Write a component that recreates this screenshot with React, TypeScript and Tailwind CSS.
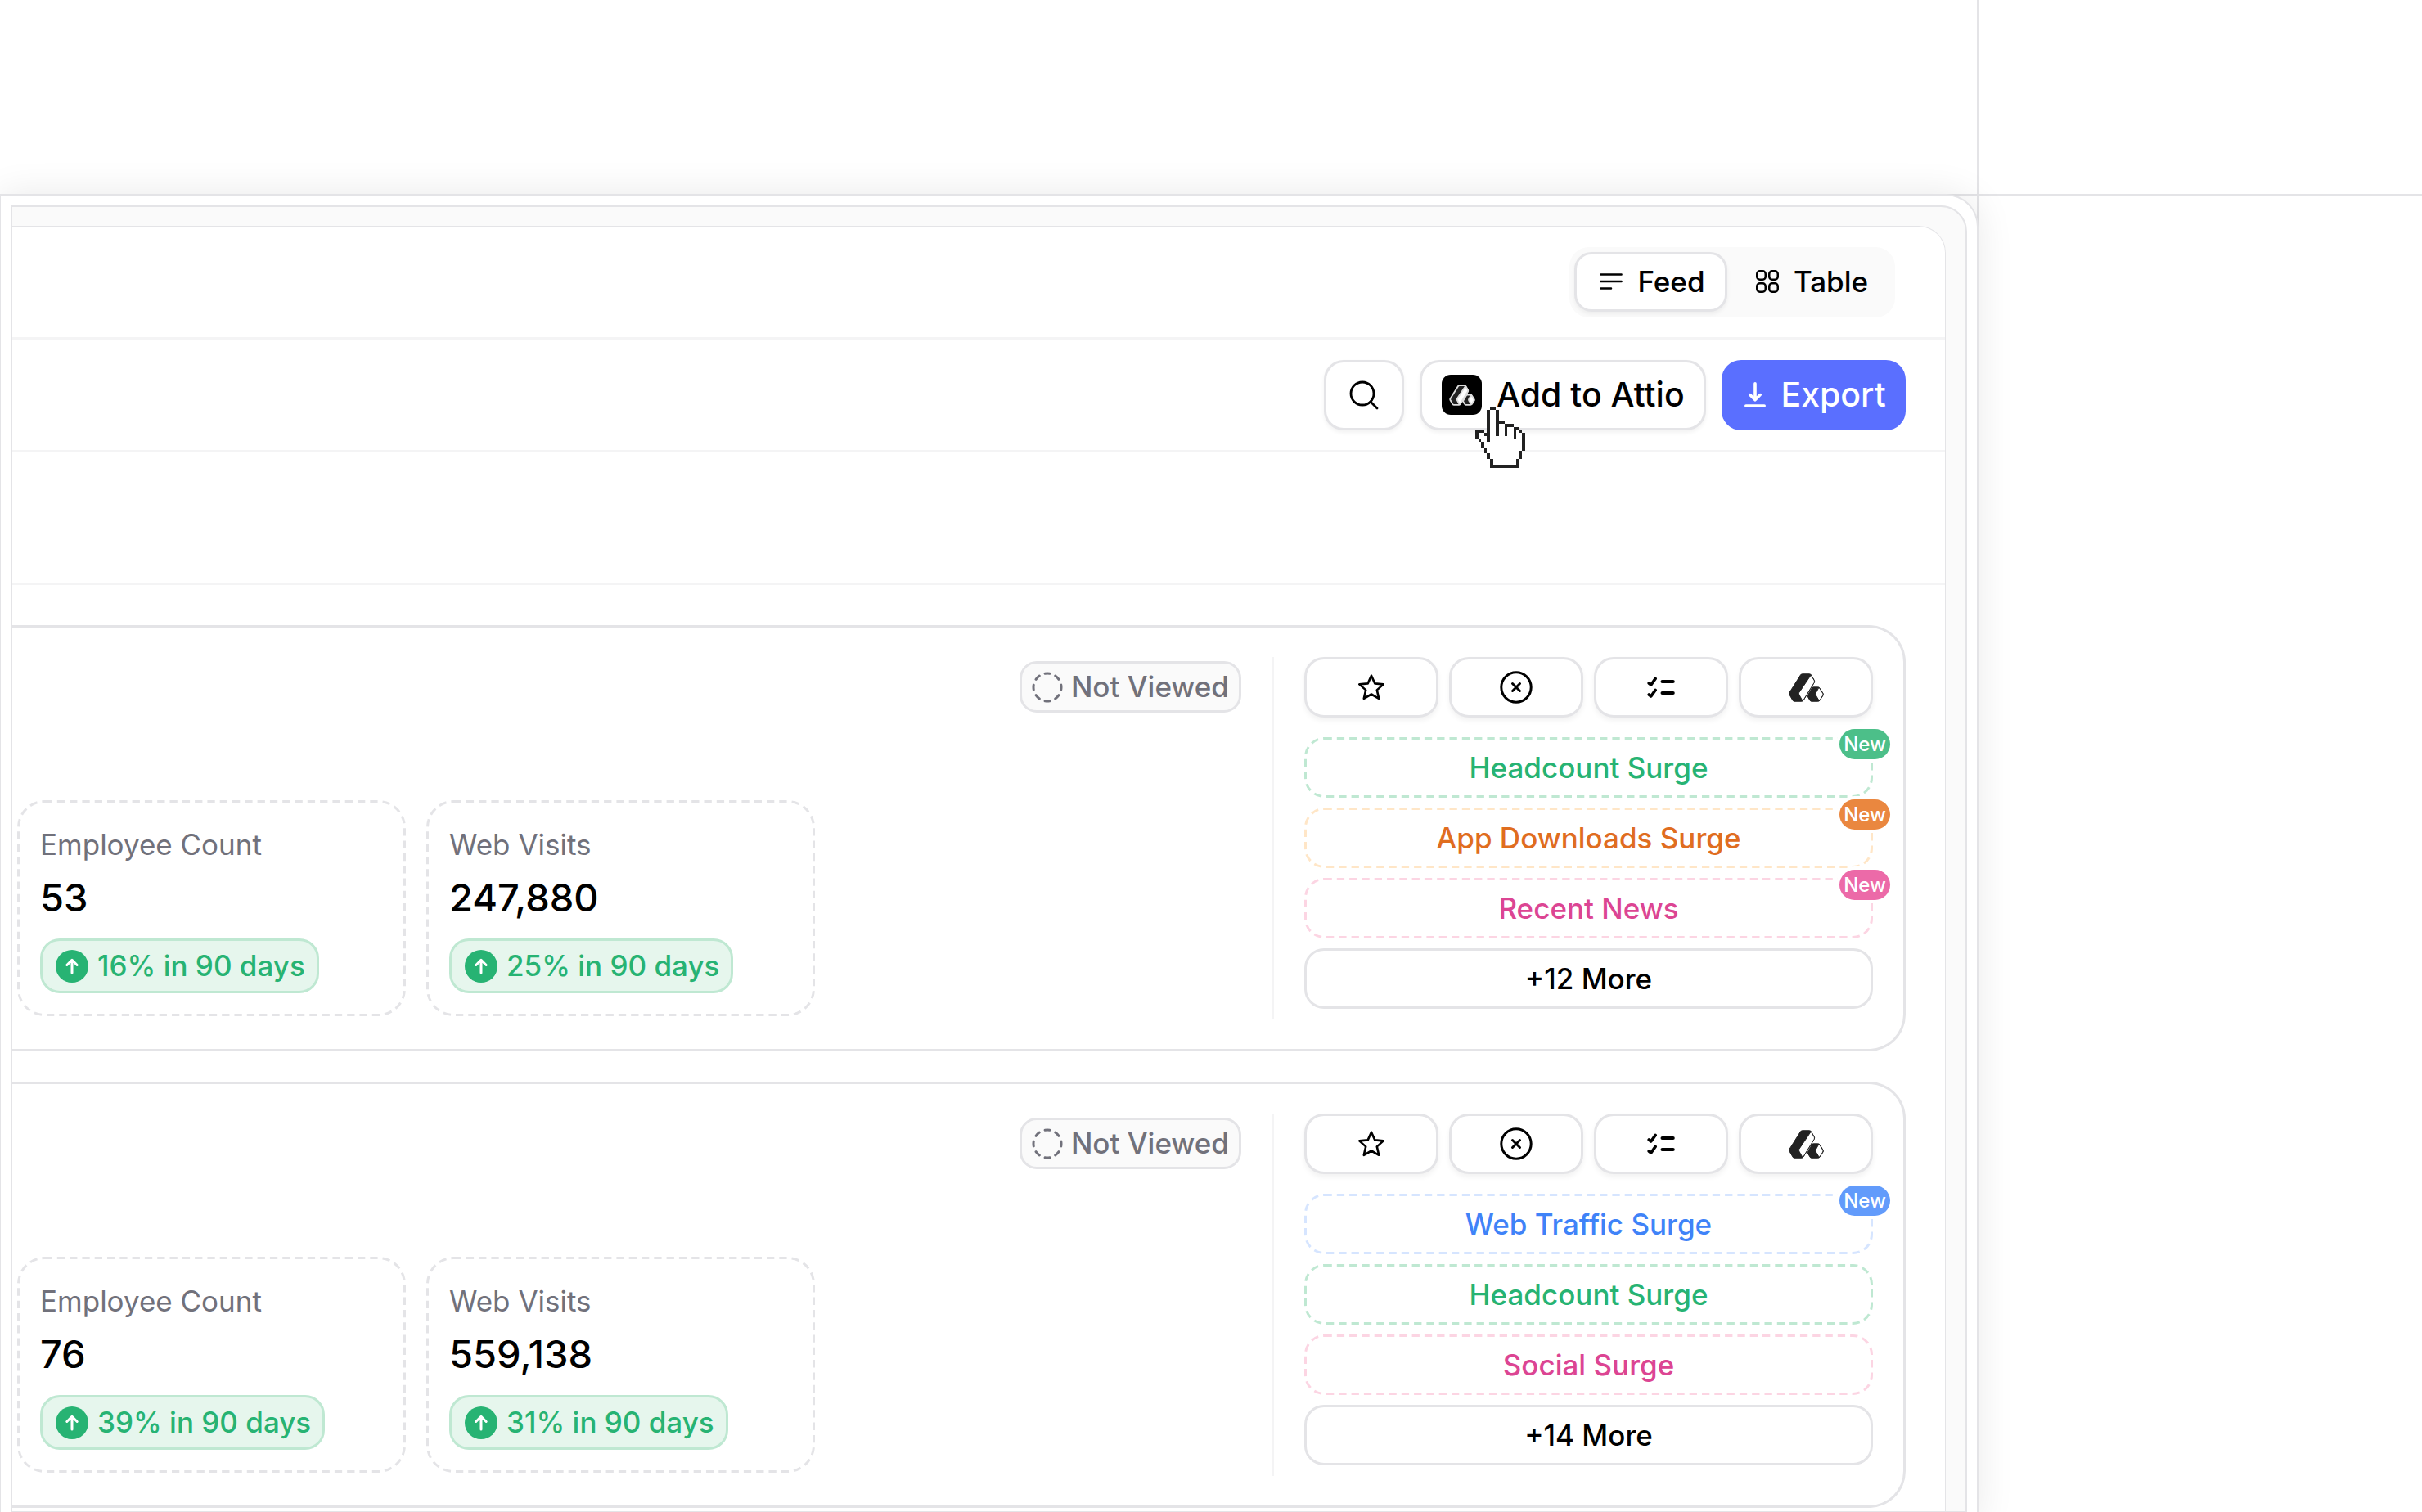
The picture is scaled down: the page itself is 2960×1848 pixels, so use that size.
import type { ReactNode } from "react";
import clsx from "clsx";

type SignalTone = "green" | "orange" | "pink" | "blue";

interface Signal {
  label: string;
  tone: SignalTone;
  isNew?: boolean;
}

interface Metric {
  label: string;
  value: string;
  change: string;
}

interface Company {
  id: string;
  metrics: Metric[];
  signals: Signal[];
  more: number;
}

const companies: Company[] = [
  {
    id: "company-1",
    metrics: [
      { label: "Employee Count", value: "53", change: "16% in 90 days" },
      { label: "Web Visits", value: "247,880", change: "25% in 90 days" },
    ],
    signals: [
      { label: "Headcount Surge", tone: "green", isNew: true },
      { label: "App Downloads Surge", tone: "orange", isNew: true },
      { label: "Recent News", tone: "pink", isNew: true },
    ],
    more: 12,
  },
  {
    id: "company-2",
    metrics: [
      { label: "Employee Count", value: "76", change: "39% in 90 days" },
      { label: "Web Visits", value: "559,138", change: "31% in 90 days" },
    ],
    signals: [
      { label: "Web Traffic Surge", tone: "blue", isNew: true },
      { label: "Headcount Surge", tone: "green" },
      { label: "Social Surge", tone: "pink" },
    ],
    more: 14,
  },
];

const textStyles: Record<SignalTone, string> = {
  green: "text-[#27b373]",
  orange: "text-[#e06d1f]",
  pink: "text-[#dc4593]",
  blue: "text-[#3f83f8]",
};

const outlineStyles: Record<SignalTone, string> = {
  green: "stroke-[#bfe8d2]",
  orange: "stroke-[#ffe6c7]",
  pink: "stroke-[#fcd5e3]",
  blue: "stroke-[#d6e5ff]",
};

const badgeStyles: Record<SignalTone, string> = {
  green: "bg-[#4cbf89]",
  orange: "bg-[#ea873f]",
  pink: "bg-[#ec6aa8]",
  blue: "bg-[#629bfb]",
};

function FeedIcon() {
  return (
    <svg viewBox="0 0 28 28" className="size-7" fill="none" stroke="currentColor" strokeWidth="2.5" strokeLinecap="round" aria-hidden="true">
      <path d="M1.4 5.5h25.2M1.4 14h25.2M1.4 22.5h12.6" />
    </svg>
  );
}

function GridIcon() {
  return (
    <svg viewBox="0 0 28 28" className="size-7" fill="none" stroke="currentColor" strokeWidth="2.5" aria-hidden="true">
      <rect x="1.25" y="1.25" width="10.5" height="10.5" rx="3.5" />
      <rect x="16.25" y="1.25" width="10.5" height="10.5" rx="3.5" />
      <rect x="1.25" y="16.25" width="10.5" height="10.5" rx="3.5" />
      <rect x="16.25" y="16.25" width="10.5" height="10.5" rx="3.5" />
    </svg>
  );
}

function SearchIcon() {
  return (
    <svg viewBox="0 0 36 36" className="size-9" fill="none" stroke="currentColor" strokeWidth="2.8" strokeLinecap="round" aria-hidden="true">
      <circle cx="16" cy="16" r="14" />
      <path d="M26 26 34 34" />
    </svg>
  );
}

function DownloadIcon() {
  return (
    <svg viewBox="0 0 26 32" className="h-8 w-[26px]" fill="none" stroke="currentColor" strokeWidth="3.6" strokeLinecap="round" strokeLinejoin="round" aria-hidden="true">
      <path d="M13 1.8v19M6.8 15.6 13 21.8l6.2-6.2" />
      <path d="M1.8 29h22.4" />
    </svg>
  );
}

function StarIcon() {
  return (
    <svg viewBox="0 0 32 32" className="size-8" fill="none" stroke="currentColor" strokeWidth="2.6" strokeLinejoin="round" aria-hidden="true">
      <path d="m16 1.7 4.3 9.7 10.4 1-7.9 7 2.4 10.4L16 24.5l-9.2 5.3 2.4-10.4-7.9-7 10.4-1z" />
    </svg>
  );
}

function DismissIcon() {
  return (
    <svg viewBox="0 0 40 40" className="size-10" fill="none" stroke="currentColor" strokeWidth="3" strokeLinecap="round" aria-hidden="true">
      <circle cx="20" cy="20" r="18.2" />
      <path d="m15.5 15.5 9 9M24.5 15.5l-9 9" />
    </svg>
  );
}

function ChecklistIcon() {
  return (
    <svg viewBox="0 0 34 26" className="h-[26px] w-[34px]" fill="none" stroke="currentColor" strokeWidth="4" strokeLinecap="round" strokeLinejoin="round" aria-hidden="true">
      <path d="m2.2 8 2.6 2 5.4-7.6M2.2 22l2.6 2 5.4-7.6" strokeWidth="3.6" />
      <path d="M18.5 6h13.3M18.5 20h13.3" />
    </svg>
  );
}

function AttioMark({ className, outline = "#222" }: { className?: string; outline?: string }) {
  const edge = outline === "#222" ? 3 : 8;

  return (
    <svg viewBox="-4 -4 137 112" className={className} fill="#222" stroke={outline} strokeWidth={edge} strokeLinejoin="round" aria-hidden="true">
      <path d="M50 1h26q5 0 7 4l11 19q3 5 0 9L54 99q-3 4-7 4H20q-4 0-6-4L2 78q-2-4 0-8L43 5q2-4 7-4z" />
      <path d="m82 5 12 20q2 4 0 8L54 98q-3 3-5 0L38 78q-2-4 0-8z" fill="#fff" />
      <path d="M91 50h17q5 0 7 4l12 19q2 4 0 8l-12 18q-2 4-7 4H84q-4 0-6-4l-7-12q-2-4 0-8l14-25q2-4 6-4z" />
      <path d="m114 54 12 19q2 4 0 8l-11 17q-2 3-4 0l-11-18q-2-4 0-8l10-18q2-3 4 0z" fill="#fff" />
    </svg>
  );
}

function NotViewedIcon() {
  return (
    <svg viewBox="0 0 38 38" className="size-[38px]" fill="none" stroke="currentColor" strokeWidth="3" strokeLinecap="round" aria-hidden="true">
      <circle cx="19" cy="19" r="17" pathLength="80" strokeDasharray="4.5 5.5" strokeDashoffset="2.25" />
    </svg>
  );
}

function RiseIcon() {
  return (
    <svg viewBox="0 0 40 40" className="size-10" aria-hidden="true">
      <circle cx="20" cy="20" r="20" fill="#27b373" />
      <path d="M20 28V12.5M13.8 18.5 20 12.3l6.2 6.2" fill="none" stroke="#fff" strokeWidth="3" strokeLinecap="round" strokeLinejoin="round" />
    </svg>
  );
}

// CSS dashed borders come out too short at this width
function DashedOutline({ radius, className }: { radius: number; className: string }) {
  return (
    <svg className={clsx("pointer-events-none absolute inset-0 h-full w-full", className)} fill="none" strokeWidth="3" strokeDasharray="9.3 6" aria-hidden="true">
      <rect x="1.5" y="1.5" rx={radius} className="h-[calc(100%-3px)] w-[calc(100%-3px)]" />
    </svg>
  );
}

// "#" is outline, "." is the white inside of the hand
const handPixels = [
  "     ##          ",
  "    #..#         ",
  "    #..#         ",
  "    #..#         ",
  "    #..#         ",
  "    #..###       ",
  "    #..#..###    ",
  "    #..#..#..##  ",
  "### #..#..#..#.# ",
  "#..##..#..#..#..#",
  "#...#........#..#",
  " #..#...........#",
  "  #.............#",
  "  #.............#",
  "   #............#",
  "   #...........# ",
  "    #..........# ",
  "    #..........# ",
  "     #........#  ",
  "     #........#  ",
  "     ##########  ",
];

function HandCursor() {
  return (
    <svg
      viewBox="0 0 17 21"
      shapeRendering="crispEdges"
      className="pointer-events-none absolute top-[57px] left-[68px] z-10 h-[75px] w-[61px]"
      aria-hidden="true"
    >
      {handPixels.flatMap((row, y) =>
        [...row].map((pixel, x) =>
          pixel === " " ? null : <rect key={`${x}-${y}`} x={x} y={y} width="1" height="1" fill={pixel === "#" ? "#222" : "#fff"} />,
        ),
      )}
    </svg>
  );
}

function ViewSwitch() {
  return (
    <div className="flex h-[86px] w-[398px] rounded-[24px] bg-[#fafafa] p-[6px] text-[35px] font-medium">
      <button
        type="button"
        aria-pressed="true"
        className="flex h-[73px] w-[187px] items-center justify-center gap-[18px] rounded-[21px] border-[3px] border-zinc-200 bg-white pl-1 shadow-[0_3px_5px_rgba(0,0,0,.05)]"
      >
        <FeedIcon />
        Feed
      </button>
      <button type="button" aria-pressed="false" className="flex h-[73px] flex-1 items-center justify-center gap-[18px] pl-2">
        <GridIcon />
        Table
      </button>
    </div>
  );
}

function Toolbar() {
  return (
    <div className="flex items-center gap-[19px] text-[41px] font-medium">
      <button
        type="button"
        aria-label="Search"
        className="flex h-[86px] w-[98px] items-center justify-center rounded-[24px] border-[3px] border-zinc-200 bg-white shadow-[0_3px_5px_rgba(0,0,0,.05)]"
      >
        <SearchIcon />
      </button>
      <div className="relative">
        <button
          type="button"
          className="flex h-[86px] w-[350px] items-center gap-[18px] rounded-[24px] border-[3px] border-zinc-200 bg-white pl-6 whitespace-nowrap shadow-[0_3px_5px_rgba(0,0,0,.05)]"
        >
          <span className="flex size-[49px] shrink-0 items-center justify-center rounded-[11px] bg-black">
            <AttioMark className="h-[26px] w-8" outline="#ddd" />
          </span>
          Add to Attio
        </button>
        <HandCursor />
      </div>
      <button type="button" className="flex h-[86px] w-[225px] items-center justify-center gap-[18px] rounded-[24px] bg-[#5a6fff] pl-1 text-white">
        <DownloadIcon />
        Export
      </button>
    </div>
  );
}

function MetricCard({ metric }: { metric: Metric }) {
  return (
    <div className="relative flex w-[475px] flex-col items-start p-7">
      <DashedOutline radius={32} className="stroke-zinc-200" />
      <div className="text-[35px] leading-[53px] text-zinc-500">{metric.label}</div>
      <div className="text-[47px] leading-[75px] font-medium">{metric.value}</div>
      <div className="mt-[13px] flex h-[67px] items-center gap-[11px] rounded-[24px] border-[3px] border-[#bfe8d2] bg-[#e6f6ed] px-[14px] pl-4 text-[35px] font-medium text-[#27b373]">
        <RiseIcon />
        {metric.change}
      </div>
    </div>
  );
}

function ActionButton({ label, children }: { label: string; children: ReactNode }) {
  return (
    <button
      type="button"
      aria-label={label}
      className="flex h-[74px] items-center justify-center rounded-[24px] border-[3px] border-zinc-200 bg-white shadow-[0_4px_6px_rgba(0,0,0,.05)]"
    >
      {children}
    </button>
  );
}

function SignalPill({ signal }: { signal: Signal }) {
  return (
    <div className={clsx("relative flex h-[74px] items-center justify-center", textStyles[signal.tone])}>
      <DashedOutline radius={23} className={outlineStyles[signal.tone]} />
      {signal.label}
      {signal.isNew ? (
        <span
          className={clsx(
            "absolute -top-[10px] -right-[21px] flex h-[37px] w-[62px] items-center justify-center rounded-full text-[24px] text-white ring-4 ring-white",
            badgeStyles[signal.tone],
          )}
        >
          New
        </span>
      ) : null}
    </div>
  );
}

function CompanyCard({ company }: { company: Company }) {
  return (
    <article className="flex rounded-r-[45px] border-[3px] border-l-0 border-zinc-200 bg-white py-9 pr-[37px] pl-[6px]">
      <div className="flex flex-1 flex-col justify-between pt-[5px] pb-1">
        <div className="mr-[37px] flex h-[63px] items-center gap-[10px] self-end rounded-[21px] border-[3px] border-zinc-200 bg-[#fafafa] px-3 text-[35px] font-medium text-zinc-500">
          <NotViewedIcon />
          Not Viewed
        </div>
        <div className="flex gap-[25px]">
          {company.metrics.map((metric) => (
            <MetricCard key={metric.label} metric={metric} />
          ))}
        </div>
      </div>
      <div className="w-[735px] border-l-[3px] border-zinc-100 pb-[13px] pl-[37px] text-[35px] font-medium">
        <div className="grid grid-cols-4 gap-[13px]">
          <ActionButton label="Save">
            <StarIcon />
          </ActionButton>
          <ActionButton label="Dismiss">
            <DismissIcon />
          </ActionButton>
          <ActionButton label="Add to list">
            <ChecklistIcon />
          </ActionButton>
          <ActionButton label="Open in Attio">
            <AttioMark className="h-[37px] w-[45px]" />
          </ActionButton>
        </div>
        <div className="mt-6 flex flex-col gap-3">
          {company.signals.map((signal) => (
            <SignalPill key={signal.label} signal={signal} />
          ))}
          <button type="button" className="h-[74px] rounded-[24px] border-[3px] border-zinc-200 bg-white">
            +{company.more} More
          </button>
        </div>
      </div>
    </article>
  );
}

export default function App() {
  return (
    <div className="grid h-screen grid-cols-[minmax(0,1fr)_542px] grid-rows-[239px_minmax(0,1fr)] overflow-hidden bg-white font-['Inter',sans-serif] text-black">
      <div className="border-r-2 border-b-2 border-zinc-200" />
      <div className="border-b-2 border-zinc-200" />
      <main className="-mt-[2px] border-r-2 border-zinc-200">
        <div className="-mr-[2px] rounded-tr-[40px] border border-t-2 border-r-2 border-zinc-200 bg-white p-3 shadow-[0_0_46px_rgba(0,0,0,.09)]">
          <div className="overflow-hidden rounded-tr-[32px] border-2 border-zinc-200 bg-[#fafafa] pt-[23px] pr-6">
            <div className="rounded-tr-[33px] border-t border-r border-zinc-200 bg-white pb-1">
              <header className="flex h-[138px] items-center justify-end border-b-[3px] border-zinc-100 pr-[61px]">
                <ViewSwitch />
              </header>
              <div className="flex h-[138px] items-center justify-end border-b-[3px] border-zinc-100 pr-12">
                <Toolbar />
              </div>
              <div className="h-[162px] border-b-[3px] border-zinc-100" />
              <div className="flex flex-col gap-[37px] pt-[49px] pr-12">
                {companies.map((company) => (
                  <CompanyCard key={company.id} company={company} />
                ))}
              </div>
            </div>
          </div>
        </div>
      </main>
      <aside />
    </div>
  );
}
